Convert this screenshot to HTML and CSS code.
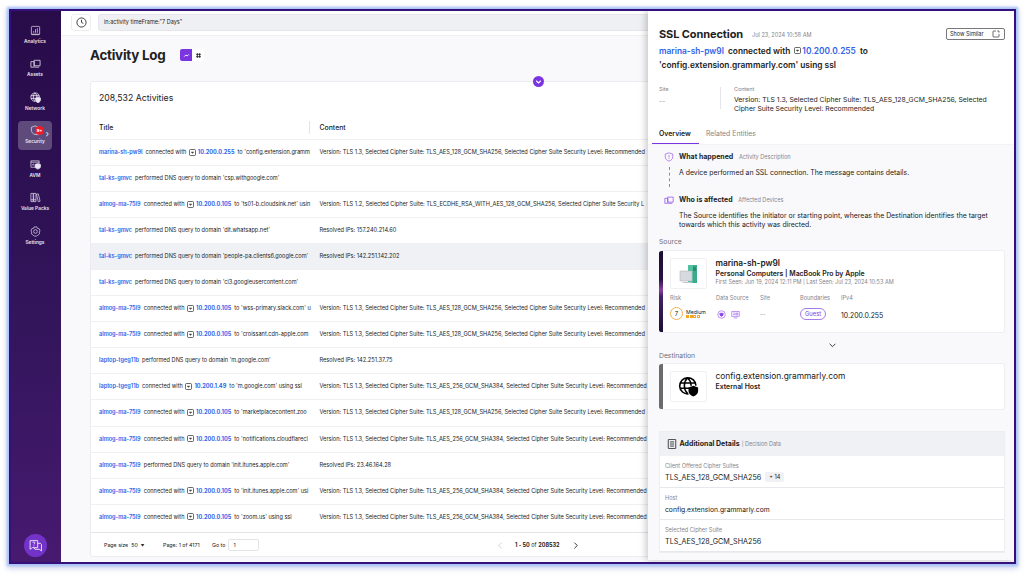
FILE: index.html
```
<!DOCTYPE html>
<html lang="en">
<head>
    <meta charset="UTF-8">
    <meta name="viewport" content="width=device-width, initial-scale=1.0">
    <title>Activity Log</title>
    <link rel="stylesheet" href="styles.css">
</head>
<body>

<svg class="sprite" xmlns="http://www.w3.org/2000/svg">
    <symbol id="host" viewBox="0 0 12 12">
        <rect x="0.8" y="0.8" width="10.4" height="10.4" rx="2" fill="none" stroke="#333" stroke-width="1.3"/>
        <path d="M4 4.5h4v1.5l-2 2-2-2z" fill="#444" stroke="none"/>
    </symbol>
    <symbol id="devices" viewBox="0 0 24 24">
        <path d="M9 17V5h13v12H10M2 8h7v12H2zM10 20h10" fill="none" stroke="currentColor" stroke-width="1.7" stroke-linejoin="round"/>
    </symbol>
    <symbol id="globe" viewBox="0 0 24 24">
        <path d="M20.5 11A9.3 9.3 0 1 0 12 20.5M2 8h18M2 14h11M11 2c-5 5-5 13 0 18M11 2c3 3 4 6 4 9" fill="none" stroke="currentColor" stroke-width="1.8"/>
        <path d="M17.5 11l5.5 2v4c0 3-2 5-5.5 6.5C14 22 12 20 12 17v-4z" fill="currentColor"/>
    </symbol>
</svg>

<div class="window">
    <nav class="sidebar">
        <a class="nav-item">
            <svg viewBox="0 0 24 24"><rect x="3" y="3" width="18" height="18" rx="2"/><path d="M8 17v-4M12 17V9M16 17V7M3 20h18"/></svg>
            <span>Analytics</span>
        </a>
        <a class="nav-item">
            <svg><use href="#devices"/></svg>
            <span>Assets</span>
        </a>
        <a class="nav-item">
            <svg><use href="#globe"/></svg>
            <span>Network</span>
        </a>
        <a class="nav-item active">
            <svg viewBox="0 0 24 24"><path d="M11 2l8 3v6c0 5-3 8-8 10-5-2-8-5-8-10V5z"/><path d="M14 15h7v6h-7z" fill="currentColor"/></svg>
            <span>Security</span>
            <b class="count">9+</b>
            <i class="more">›</i>
        </a>
        <a class="nav-item">
            <svg viewBox="0 0 24 24"><path d="M12 18H2V4h18v6M2 7h18M5 14v-3M8 14v-4"/><path d="M17 10l6 2v4c0 3-2 5-6 6-4-1-6-3-6-6v-4z" fill="currentColor"/></svg>
            <span>AVM</span>
        </a>
        <a class="nav-item">
            <svg viewBox="0 0 24 24"><path d="M2 3h5v18H2zM8 3h5v18H8zM14 5l4-1 4 16-4 1zM2 17h11"/></svg>
            <span>Value Packs</span>
        </a>
        <a class="nav-item">
            <svg viewBox="0 0 24 24"><path d="M9 2h6l1 3 4 1 2 5-2 2 1 4-4 3-2 2H9l-2-2-4-3 1-4-2-2 2-5 4-1z"/><circle cx="12" cy="12" r="4"/></svg>
            <span>Settings</span>
        </a>
        <button class="help">
            <svg viewBox="0 0 24 24"><path d="M16 8V3H2v16l4-3h10V8M16 8h5l2 2v12l-4-3h-8l-2-3"/><path d="M7 7c0-2 4-2 4 0s-2 1-2 3M9 12v1.5"/></svg>
        </button>
    </nav>

    <main class="main">
        <div class="topbar">
            <button class="history">
                <svg viewBox="0 0 24 24"><circle cx="12" cy="12" r="10"/><path d="M12 6v6l4 2"/></svg>
            </button>
            <div class="search">in:activity timeFrame:"7 Days"</div>
        </div>

        <div class="heading">
            <h1>Activity Log</h1>
            <div class="toggle">
                <span class="on"><svg viewBox="0 0 12 12"><path d="M2 8l3-3 2 2 3-3"/></svg></span>
                <span><svg viewBox="0 0 12 12"><path d="M4 2v8M8 2v8M2 4h8M2 8h8"/></svg></span>
            </div>
        </div>

        <section class="card">
            <button class="expand"><svg viewBox="0 0 12 12"><path d="M3 5l3 3 3-3"/></svg></button>
            <h2>208,532 Activities</h2>
            <div class="row head"><div class="title">Title</div><div class="content">Content</div></div>

            <div class="row"><div class="title"><a>marina-sh-pw9l</a> connected with <svg><use href="#host"/></svg><a class="ip">10.200.0.255</a> to 'config.extension.gramm</div><div class="content">Version: TLS 1.3, Selected Cipher Suite: TLS_AES_128_GCM_SHA256, Selected Cipher Suite Security Level: Recommended</div></div>
            <div class="row"><div class="title"><a>tal-ks-gmvc</a> performed DNS query to domain 'csp.withgoogle.com'</div><div class="content"></div></div>
            <div class="row"><div class="title"><a>almog-ma-75l9</a> connected with <svg><use href="#host"/></svg><a class="ip">10.200.0.105</a> to 'ts01-b.cloudsink.net' usin</div><div class="content">Version: TLS 1.2, Selected Cipher Suite: TLS_ECDHE_RSA_WITH_AES_128_GCM_SHA256, Selected Cipher Suite Security L</div></div>
            <div class="row"><div class="title"><a>tal-ks-gmvc</a> performed DNS query to domain 'dit.whatsapp.net'</div><div class="content">Resolved IPs: 157.240.214.60</div></div>
            <div class="row selected"><div class="title"><a>tal-ks-gmvc</a> performed DNS query to domain 'people-pa.clients6.google.com'</div><div class="content">Resolved IPs: 142.251.142.202</div></div>
            <div class="row"><div class="title"><a>tal-ks-gmvc</a> performed DNS query to domain 'ci3.googleusercontent.com'</div><div class="content"></div></div>
            <div class="row"><div class="title"><a>almog-ma-75l9</a> connected with <svg><use href="#host"/></svg><a class="ip">10.200.0.105</a> to 'wss-primary.slack.com' u</div><div class="content">Version: TLS 1.3, Selected Cipher Suite: TLS_AES_128_GCM_SHA256, Selected Cipher Suite Security Level: Recommended</div></div>
            <div class="row"><div class="title"><a>almog-ma-75l9</a> connected with <svg><use href="#host"/></svg><a class="ip">10.200.0.105</a> to 'croissant.cdn-apple.com</div><div class="content">Version: TLS 1.3, Selected Cipher Suite: TLS_AES_128_GCM_SHA256, Selected Cipher Suite Security Level: Recommended</div></div>
            <div class="row"><div class="title"><a>laptop-tgeg11b</a> performed DNS query to domain 'm.google.com'</div><div class="content">Resolved IPs: 142.251.37.75</div></div>
            <div class="row"><div class="title"><a>laptop-tgeg11b</a> connected with <svg><use href="#host"/></svg><a class="ip">10.200.1.49</a> to 'm.google.com' using ssl</div><div class="content">Version: TLS 1.3, Selected Cipher Suite: TLS_AES_256_GCM_SHA384, Selected Cipher Suite Security Level: Recommended</div></div>
            <div class="row"><div class="title"><a>almog-ma-75l9</a> connected with <svg><use href="#host"/></svg><a class="ip">10.200.0.105</a> to 'marketplacecontent.zoo</div><div class="content">Version: TLS 1.3, Selected Cipher Suite: TLS_AES_128_GCM_SHA256, Selected Cipher Suite Security Level: Recommended</div></div>
            <div class="row"><div class="title"><a>almog-ma-75l9</a> connected with <svg><use href="#host"/></svg><a class="ip">10.200.0.105</a> to 'notifications.cloudflarecl</div><div class="content">Version: TLS 1.3, Selected Cipher Suite: TLS_AES_256_GCM_SHA384, Selected Cipher Suite Security Level: Recommended</div></div>
            <div class="row"><div class="title"><a>almog-ma-75l9</a> performed DNS query to domain 'init.itunes.apple.com'</div><div class="content">Resolved IPs: 23.46.164.28</div></div>
            <div class="row"><div class="title"><a>almog-ma-75l9</a> connected with <svg><use href="#host"/></svg><a class="ip">10.200.0.105</a> to 'init.itunes.apple.com' usi</div><div class="content">Version: TLS 1.3, Selected Cipher Suite: TLS_AES_256_GCM_SHA384, Selected Cipher Suite Security Level: Recommended</div></div>
            <div class="row last"><div class="title"><a>almog-ma-75l9</a> connected with <svg><use href="#host"/></svg><a class="ip">10.200.0.105</a> to 'zoom.us' using ssl</div><div class="content">Version: TLS 1.3, Selected Cipher Suite: TLS_AES_256_GCM_SHA384, Selected Cipher Suite Security Level: Recommended</div></div>

            <footer class="pager">
                <span class="size">Page size &nbsp;50 &nbsp;<i>▼</i></span>
                <span class="page">Page: 1 of 4171</span>
                <span>Go to</span>
                <span class="goto">1</span>
                <svg class="prev" viewBox="0 0 12 12"><path d="M8 1L3 6l5 5"/></svg>
                <span class="range"><b>1 - 50</b> of <b>208532</b></span>
                <svg viewBox="0 0 12 12"><path d="M4 1l5 5-5 5"/></svg>
            </footer>
        </section>
    </main>

    <aside class="panel">
        <header class="panel-head">
            <div class="panel-title">
                <h2>SSL Connection</h2>
                <time>Jul 23, 2024 10:58 AM</time>
                <button class="similar">Show Similar <svg viewBox="0 0 24 24"><path d="M12 3H5a2 2 0 0 0-2 2v14a2 2 0 0 0 2 2h14a2 2 0 0 0 2-2v-7M16 3h5v5"/></svg></button>
            </div>
            <p class="summary"><a>marina-sh-pw9l</a> connected with <svg><use href="#host"/></svg><a class="ip">10.200.0.255</a> to<br>'config.extension.grammarly.com' using ssl</p>
            <div class="facts">
                <div class="fact-site"><label>Site</label><p class="dim">--</p></div>
                <div class="fact-content"><label>Content</label><p>Version: TLS 1.3, Selected Cipher Suite: TLS_AES_128_GCM_SHA256, Selected<br>Cipher Suite Security Level: Recommended</p></div>
            </div>
            <div class="tabs"><span class="on">Overview</span><span>Related Entities</span></div>
        </header>

        <div class="panel-body">
            <div class="step what">
                <div class="step-icon">
                    <svg viewBox="0 0 24 24"><path d="M12 2l9 3v7c0 5-4 8-9 10-5-2-9-5-9-10V5zM12 7v6M12 15v2"/></svg>
                    <i class="dots"></i>
                </div>
                <div>
                    <h3>What happened <small>Activity Description</small></h3>
                    <p>A device performed an SSL connection. The message contains details.</p>
                </div>
            </div>
            <div class="step who">
                <div class="step-icon"><svg><use href="#devices"/></svg></div>
                <div>
                    <h3>Who is affected <small>Affected Devices</small></h3>
                    <p>The Source identifies the initiator or starting point, whereas the Destination identifies the target<br>towards which this activity was directed.</p>
                </div>
            </div>

            <h4>Source</h4>
            <div class="entity source">
                <div class="entity-top">
                    <div class="thumb">
                        <svg viewBox="0 0 36 30"><path d="M20 6h6v18h-9z" fill="#3fa98b"/><path d="M17 6h5v18h-5z" fill="#4fc0a0"/><path d="M22 9h3M22 11h3" stroke="#2b7d68"/><path d="M9 12h12v10H9z" fill="#d6d9dd" stroke="#b3b7bc" stroke-width=".6"/><path d="M12 23h8l1 1H11z" fill="#c5c8cc"/></svg>
                    </div>
                    <div>
                        <h5>marina-sh-pw9l</h5>
                        <b>Personal Computers | MacBook Pro by Apple</b>
                        <small>First Seen: Jun 19, 2024 12:11 PM | Last Seen: Jul 23, 2024 10:53 AM</small>
                    </div>
                </div>
                <div class="attrs">
                    <div><label>Risk</label><div class="value risk"><span class="score">7</span><span class="level">Medium<i><s></s><s></s><s class="off"></s><s class="off"></s></i></span></div></div>
                    <div><label>Data Source</label><div class="value sources">
                        <svg viewBox="0 0 24 24"><circle cx="12" cy="12" r="10"/><path d="M7 9l5-1 5 1-1 5-4 3-4-3z" fill="currentColor"/></svg>
                        <svg viewBox="0 0 24 24"><path d="M2 4h20v13H2zM7 21h10M6 8h5M6 12h5M13 8h5v5h-5z"/></svg>
                    </div></div>
                    <div><label>Site</label><div class="value dim">--</div></div>
                    <div><label>Boundaries</label><div class="value"><span class="pill">Guest</span></div></div>
                    <div><label>IPv4</label><div class="value ipv4">10.200.0.255</div></div>
                </div>
            </div>

            <svg class="arrow" viewBox="0 0 12 12"><path d="M1 3l5 5 5-5"/></svg>

            <h4>Destination</h4>
            <div class="entity destination">
                <div class="entity-top">
                    <div class="thumb"><svg class="world"><use href="#globe"/></svg></div>
                    <div>
                        <h5>config.extension.grammarly.com</h5>
                        <b>External Host</b>
                    </div>
                </div>
            </div>

            <div class="details">
                <div class="details-head">
                    <svg viewBox="0 0 24 24"><rect x="3" y="1" width="18" height="22" rx="1"/><path d="M7 7h10M7 12h10M7 17h10"/></svg>
                    <b>Additional Details</b><small>| Decision Data</small>
                </div>
                <div class="detail"><label>Client Offered Cipher Suites</label><p class="cipher">TLS_AES_128_GCM_SHA256 <span class="plus">+ 14</span></p></div>
                <div class="detail"><label>Host</label><p>config.extension.grammarly.com</p></div>
                <div class="detail"><label>Selected Cipher Suite</label><p class="cipher">TLS_AES_128_GCM_SHA256</p></div>
            </div>
        </div>
    </aside>
</div>

</body>
</html>
```
FILE: styles.css
```
* {
    box-sizing: border-box;
}
body {
    margin: 0;
    padding: 9px;
    height: 575px;
    overflow: hidden;
    background: #fff;
    color: #222;
    font-family: Inter, "Liberation Sans", sans-serif;
    font-size: 6px;
}
h1, h2, h3, h4, h5, p {
    margin: 0;
}
button {
    font-family: inherit;
    padding: 0;
}
label, small {
    color: #85858c;
}
a {
    color: #2f62e8;
    font-weight: 600;
}
svg {
    fill: none;
    stroke: currentColor;
    stroke-width: 1.5;
    flex: none;
}
.sprite {
    position: absolute;
    width: 0;
    height: 0;
}
.dim {
    color: #999;
}

.window {
    position: relative;
    display: flex;
    width: 1007px;
    height: 555px;
    border: 2px solid #34107a;
    background: #f9f9fc;
    box-shadow: 0 0 2px 2px #aac4f8, 0 2px 6px 2px #c5cbe8;
    overflow: hidden;
}

/* sidebar */
.sidebar {
    flex: none;
    width: 50px;
    display: flex;
    flex-direction: column;
    align-items: center;
    padding: 9px 2px 5px 0;
    background: linear-gradient(#280b49, #32155b 55%, #471a70);
    color: #e9e4f0;
}
.nav-item {
    position: relative;
    flex: none;
    width: 34px;
    height: 29px;
    margin-bottom: 4.5px;
    display: flex;
    flex-direction: column;
    align-items: center;
    justify-content: center;
    gap: 2px;
    border-radius: 4px;
    color: #e9e4f0;
    font-size: 4.8px;
    line-height: 7px;
    white-space: nowrap;
}
.nav-item svg {
    width: 11px;
    height: 11px;
}
.nav-item.active {
    background: #5f4a7c;
}
.count {
    position: absolute;
    left: 17px;
    top: 5px;
    width: 9px;
    height: 9px;
    border-radius: 50%;
    background: #ee1c24;
    color: #fff;
    font-size: 4px;
    line-height: 9px;
    text-align: center;
}
.more {
    position: absolute;
    right: 3px;
    top: 9px;
    font-size: 9px;
    font-style: normal;
    font-weight: 400;
}
.help {
    width: 23px;
    height: 23px;
    margin-top: auto;
    border: none;
    border-radius: 50%;
    background: #7333c9;
    color: #fff;
}
.help svg {
    width: 13px;
    height: 13px;
    display: block;
    margin: 0 auto;
}

/* activity log */
.main {
    flex: 1;
    min-width: 0;
}
.topbar {
    display: flex;
    gap: 7px;
    height: 25px;
    padding: 3px 0 0 10px;
    background: #fff;
    border-bottom: 1px solid #f0f0f3;
}
.history {
    width: 20px;
    height: 17px;
    border: 1px solid #ededf0;
    border-radius: 3px;
    background: #fff;
    color: #333;
}
.history svg {
    display: block;
    width: 11px;
    height: 11px;
    margin: 0 auto;
    stroke-width: 2;
}
.search {
    flex: 1;
    height: 17px;
    padding-left: 5px;
    border: 1px solid #e6e6ea;
    border-radius: 3px;
    background: #eff0f4;
    line-height: 15px;
    font-size: 5.5px;
}
.heading {
    display: flex;
    align-items: center;
    gap: 15px;
    height: 45px;
    padding: 0 0 7px 29px;
}
.heading h1 {
    font-size: 13.4px;
    letter-spacing: -0.25px;
}
.toggle {
    display: flex;
    height: 12px;
    border-radius: 2px;
    background: #fff;
    overflow: hidden;
}
.toggle span {
    width: 12px;
    display: flex;
    align-items: center;
    justify-content: center;
}
.toggle .on {
    background: #7b35e0;
    color: #fff;
}
.toggle svg {
    width: 7px;
    height: 7px;
}
.card {
    position: relative;
    height: 476px;
    margin-left: 29px;
    border: 1px solid #ececf0;
    border-radius: 3px;
    background: #fff;
}
.expand {
    position: absolute;
    left: 442px;
    top: -6px;
    width: 11px;
    height: 11px;
    border: none;
    border-radius: 50%;
    background: #7b35e0;
    color: #fff;
}
.expand svg {
    display: block;
    width: 9px;
    height: 9px;
    margin: 0 auto;
}
.card h2 {
    height: 34px;
    padding-left: 8px;
    font-size: 8.7px;
    font-weight: 400;
    line-height: 32px;
}
.row {
    display: flex;
    height: 26.05px;
    border-bottom: 1px solid #f0f0f2;
    font-size: 5.6px;
    line-height: 25px;
    white-space: nowrap;
}
.row.selected {
    background: #f0f1f5;
}
.row.last {
    height: 27.7px;
    border-bottom: none;
}
.row .title {
    flex: none;
    width: 214px;
    margin-right: 14.5px;
    padding-left: 8px;
}
.row .content {
    font-size: 5.65px;
}
.row .title a {
    margin-right: 1.5px;
}
.row .title .ip {
    font-weight: 700;
}
.row svg {
    width: 7px;
    height: 7px;
    margin: 0 2px 0 1px;
    vertical-align: -1.5px;
}
.row.head {
    height: 24px;
    font-weight: 500;
    line-height: 23px;
}
.row.head .title, .row.head .content {
    font-size: 6.9px;
}
.row.head .title {
    width: 219px;
    height: 13px;
    margin: 5px 9.5px 0 0;
    border-right: 1px solid #e4e4e8;
    line-height: 13px;
}
.pager {
    display: flex;
    align-items: center;
    height: 25px;
    padding-left: 13px;
    border-top: 1px solid #e4e4e8;
    font-size: 5.3px;
}
.pager .size {
    width: 59px;
}
.pager .size i {
    font-size: 3.5px;
    font-style: normal;
}
.pager .page {
    width: 49px;
}
.pager .goto {
    width: 31px;
    height: 12px;
    margin-left: 3px;
    padding-left: 4px;
    border: 1px solid #e4e4e8;
    border-radius: 2px;
    line-height: 10px;
}
.pager svg {
    width: 7px;
    height: 7px;
}
.pager .prev {
    margin-left: 238px;
    color: #ccc;
}
.pager .range {
    width: 46px;
    margin: 0 11px 0 10.5px;
    font-size: 5.5px;
    white-space: nowrap;
}

/* details drawer */
.panel {
    position: absolute;
    top: 0;
    right: 0;
    width: 366px;
    height: 549px;
    background: #fff;
    box-shadow: -2px 0 7px rgba(0, 0, 0, 0.22);
    overflow: hidden;
}
.panel-head {
    height: 133px;
    padding: 15px 9px 0 11px;
    display: flex;
    flex-direction: column;
}
.panel-title {
    display: flex;
    align-items: center;
    height: 15px;
}
.panel-title h2 {
    width: 93px;
    font-size: 11px;
    letter-spacing: -0.1px;
    white-space: nowrap;
}
.panel-title time {
    padding-top: 2px;
    color: #85858c;
    font-size: 5.6px;
}
.similar {
    display: flex;
    align-items: center;
    justify-content: space-between;
    width: 59px;
    height: 12px;
    margin-left: auto;
    padding: 0 4px 0 3px;
    border: 1px solid #77777c;
    border-radius: 2px;
    background: #fff;
    color: #222;
    font-size: 5.5px;
}
.similar svg {
    width: 8px;
    height: 8px;
    stroke-width: 2;
}
.summary {
    margin-top: 4px;
    font-size: 8.35px;
    font-weight: 600;
    line-height: 13.5px;
    white-space: nowrap;
}
.summary a {
    margin-right: 2px;
}
.summary svg {
    width: 7px;
    height: 7px;
    margin: 0 1.5px;
}
.facts {
    display: flex;
    margin-top: 13px;
    height: 28px;
    font-size: 6.85px;
    line-height: 9.4px;
    white-space: nowrap;
}
.facts label {
    display: block;
    height: 9px;
    font-size: 5.4px;
    line-height: 7px;
}
.fact-site {
    width: 62px;
    height: 22px;
    margin: 2px 13px 0 0;
    border-right: 1px solid #e6e6ea;
}
.fact-site label {
    margin-top: -1px;
    height: 11px;
}
.fact-content {
    padding-top: 1px;
}
.tabs {
    display: flex;
    height: 20px;
    margin: auto 0 0 -7px;
    font-size: 6.9px;
    line-height: 20px;
}
.tabs span {
    padding: 0 7px;
    color: #85858c;
}
.tabs .on {
    width: 47px;
    border-bottom: 1px solid #7b35e0;
    color: #222;
    font-weight: 600;
}
.panel-body {
    height: 416px;
    padding: 7px 9px 0 11px;
    background: #f9f9fc;
    border-top: 1px solid #f3f3f6;
}
.step {
    display: flex;
    height: 43px;
}
.step.who {
    height: 42px;
}
.step-icon {
    width: 20px;
    padding-left: 5px;
    color: #8b46e8;
}
.step-icon svg {
    display: block;
    width: 10px;
    height: 10px;
}
.dots {
    display: block;
    height: 20px;
    margin: 5px 0 0 5px;
    border-left: 1px dashed #a570ee;
}
.step h3 {
    font-size: 7px;
    font-weight: 700;
    line-height: 10px;
    white-space: nowrap;
}
.step h3 small {
    margin-left: 4px;
    font-size: 5.6px;
    font-weight: 400;
}
.step p {
    margin-top: 5.5px;
    font-size: 6.9px;
    line-height: 9px;
    white-space: nowrap;
}
.panel-body h4 {
    height: 12px;
    color: #707078;
    font-size: 6.8px;
    font-weight: 400;
    line-height: 9px;
}
.entity {
    height: 83px;
    padding: 7px 0 0 11px;
    border: 1px solid #eeeef1;
    border-left: none;
    border-radius: 3px;
    background: linear-gradient(90deg, #6b6b6e 4px, #fff 4px);
}
.entity.source {
    margin-top: 1px;
    background: linear-gradient(#1c0e33, #2b1145 35%, #8b3fa0 48%, #43206b 56%, #1c0e33) 0 0 / 4px 100% no-repeat #fff;
}
.entity.destination {
    height: 47px;
}
.entity-top {
    display: flex;
    gap: 8.5px;
    white-space: nowrap;
}
.entity h5 {
    font-size: 8.3px;
    font-weight: 600;
    line-height: 11px;
}
.entity.destination h5 {
    font-size: 8.4px;
    font-weight: 400;
}
.entity b, .entity small {
    display: block;
    font-size: 6.9px;
    font-weight: 600;
    line-height: 9px;
}
.entity small {
    font-size: 5.5px;
    font-weight: 400;
}
.thumb {
    width: 37px;
    height: 31px;
    border: 1px solid #f0f0f3;
    border-radius: 2px;
    display: flex;
    align-items: center;
    justify-content: center;
}
.thumb svg {
    width: 36px;
    height: 30px;
    stroke: none;
}
.thumb .world {
    width: 21px;
    height: 21px;
    color: #000;
}
.attrs {
    display: grid;
    grid-template-columns: 46px 44px 40px 41px 60px;
    margin-top: 4.5px;
}
.attrs label {
    display: block;
    font-size: 5.6px;
    line-height: 8px;
    white-space: nowrap;
}
.value {
    display: flex;
    align-items: center;
    height: 24px;
}
.risk {
    gap: 3px;
}
.score {
    width: 13px;
    height: 13px;
    border: 1px solid #f0b050;
    border-radius: 50%;
    line-height: 11px;
    text-align: center;
}
.level {
    font-size: 5.2px;
    line-height: 6px;
}
.level i {
    display: flex;
    gap: 0.5px;
}
.level s {
    width: 3px;
    height: 3px;
    background: #f5a623;
    border: 0.5px solid #f5a623;
}
.level .off {
    background: #fff;
}
.sources {
    gap: 5px;
    padding: 2px 0 0 1px;
    color: #8b46e8;
}
.sources svg {
    width: 9px;
    height: 9px;
}
.pill {
    padding: 0 4px;
    border: 1px solid #a77be8;
    border-radius: 7px;
    color: #7b35e0;
    font-size: 5.8px;
    line-height: 10px;
}
.ipv4 {
    padding-top: 3px;
    font-size: 6.9px;
}
.arrow {
    display: block;
    width: 7px;
    height: 7px;
    margin: 9px auto 2px;
}
.details {
    margin-top: 21px;
    border: 1px solid #eeeef1;
    background: #fff;
}
.details-head {
    display: flex;
    align-items: center;
    height: 23.5px;
    padding-left: 7px;
    background: #f0f1f5;
    font-size: 7px;
}
.details-head svg {
    width: 10px;
    height: 10px;
    margin-right: 2.5px;
    stroke-width: 2;
}
.details-head small {
    margin-left: 2px;
    font-size: 5.5px;
}
.detail {
    height: 32.3px;
    padding: 6px 0 0 5px;
    border-bottom: 1px solid #e8e8ec;
    font-size: 6.75px;
}
.detail label {
    display: block;
    font-size: 5.6px;
    line-height: 8px;
}
.detail p {
    height: 12px;
    margin-top: 2px;
    line-height: 12px;
}
.detail .cipher {
    font-size: 7.2px;
}
.plus {
    display: inline-block;
    margin-left: 2px;
    padding: 0 4px;
    border-radius: 2px;
    background: #f0f1f5;
    font-size: 5.6px;
    line-height: 10px;
    vertical-align: top;
}
```
